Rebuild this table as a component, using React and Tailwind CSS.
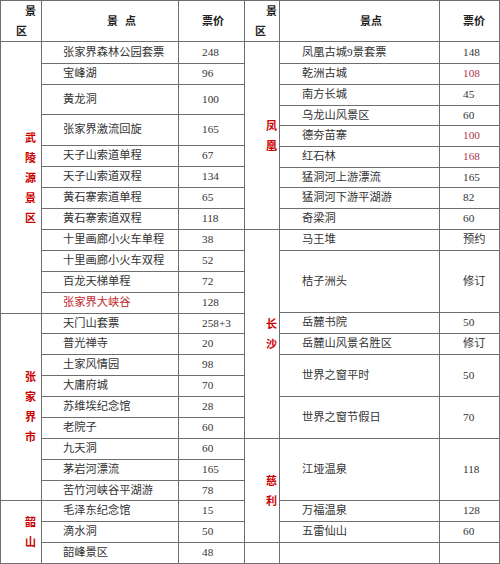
import React from 'react';

const SPAN = { 1: 'row-span-1', 3: 'row-span-3', 6: 'row-span-6', 9: 'row-span-9', 12: 'row-span-12' };

const leftGroups = [
  {
    region: '武陵源景区',
    items: [
      ['张家界森林公园套票', '248'],
      ['宝峰湖', '96'],
      ['黄龙洞', '100'],
      ['张家界激流回旋', '165'],
      ['天子山索道单程', '67'],
      ['天子山索道双程', '134'],
      ['黄石寨索道单程', '65'],
      ['黄石寨索道双程', '118'],
      ['十里画廊小火车单程', '38'],
      ['十里画廊小火车双程', '52'],
      ['百龙天梯单程', '72'],
      ['张家界大峡谷', '128', 'name'],
    ],
  },
  {
    region: '张家界市',
    items: [
      ['天门山套票', '258+3'],
      ['普光禅寺', '20'],
      ['土家风情园', '98'],
      ['大庸府城', '70'],
      ['苏维埃纪念馆', '28'],
      ['老院子', '60'],
      ['九天洞', '60'],
      ['茅岩河漂流', '165'],
      ['苦竹河峡谷平湖游', '78'],
    ],
  },
  {
    region: '韶山',
    items: [
      ['毛泽东纪念馆', '15'],
      ['滴水洞', '50'],
      ['韶峰景区', '48'],
    ],
  },
];

const rightGroups = [
  {
    region: '凤凰',
    items: [
      ['凤凰古城9景套票', '148'],
      ['乾洲古城', '108', 'price'],
      ['南方长城', '45'],
      ['乌龙山风景区', '60'],
      ['德夯苗寨', '100', 'price'],
      ['红石林', '168', 'price'],
      ['猛洞河上游漂流', '165'],
      ['猛洞河下游平湖游', '82'],
      ['奇梁洞', '60'],
    ],
  },
  {
    region: '长沙',
    items: [
      ['马王堆', '预约'],
      ['桔子洲头', '修订'],
      ['岳麓书院', '50'],
      ['岳麓山风景名胜区', '修订'],
      ['世界之窗平时', '50'],
      ['世界之窗节假日', '70'],
    ],
  },
  {
    region: '慈利',
    items: [
      ['江垭温泉', '118'],
      ['万福温泉', '128'],
      ['五雷仙山', '60'],
    ],
  },
  { region: '', items: [['', '']] },
];

function RegionCell({ text, span, pad }) {
  return (
    <div className={`${SPAN[span]} flex flex-col items-end justify-center bg-white ${pad} text-[11px] font-bold leading-[20px] text-[#cc0000]`}>
      {text.split('').map((ch, i) => (
        <div key={i}>{ch}</div>
      ))}
    </div>
  );
}

function Rows({ groups, regionPad, namePad, pricePad }) {
  return groups.map((g) => (
    <React.Fragment key={g.region || 'empty'}>
      <RegionCell text={g.region} span={g.items.length} pad={regionPad} />
      {g.items.flatMap(([name, price, red], i) => [
        <div
          key={`n${i}`}
          className={`flex items-center bg-white ${namePad} ${red === 'name' ? 'text-[#c0282d]' : 'text-[#333]'}`}
        >
          {name}
        </div>,
        <div
          key={`p${i}`}
          className={`flex items-center bg-white ${pricePad} ${red === 'price' ? 'text-[#b0344f]' : 'text-[#333]'}`}
        >
          {price}
        </div>,
      ])}
    </React.Fragment>
  ));
}

export default function App() {
  return (
    <div className="flex h-[564px] w-[500px] bg-white font-['Liberation_Serif','Noto_Sans_CJK_SC',serif] text-[11.25px] leading-none">
      {/* left half */}
      <div className="grid grid-cols-[40px_136px_65px] grid-rows-[40px_21px_20px_29px_30px_20px_20px_20px_20px_20px_20px_20px_20px_19px_20px_20px_20px_20px_20px_20px_20px_19px_20px_20px_20px] gap-px bg-[#6e6e6e] p-px">
        <div className="flex flex-col justify-center bg-white text-[11px] font-bold leading-[20px] text-[#222]">
          <div className="pr-[5px] text-right">景</div>
          <div className="pl-[15px]">区</div>
        </div>
        <div className="flex items-center bg-white pl-[65px] text-[11px] font-bold text-[#222]">
          <span>景</span>
          <span className="ml-[7px]">点</span>
        </div>
        <div className="flex items-center bg-white pl-[23px] text-[11px] font-bold text-[#222]">票价</div>
        <Rows groups={leftGroups} regionPad="pr-[5px]" namePad="pl-[21px]" pricePad="pl-[23px]" />
      </div>

      {/* right half */}
      <div className="grid grid-cols-[34px_159px_59px] grid-rows-[40px_21px_20px_20px_19px_20px_20px_19px_20px_20px_20px_61px_20px_20px_41px_41px_61px_20px_20px_20px] gap-px bg-[#6e6e6e] py-px pr-px">
        <div className="flex flex-col justify-center bg-white text-[11px] font-bold leading-[20px] text-[#222]">
          <div className="pr-[2px] text-right">景</div>
          <div className="pl-[10px]">区</div>
        </div>
        <div className="flex items-center bg-white pl-[80px] text-[11px] font-bold text-[#222]">景点</div>
        <div className="flex items-center bg-white pl-[23px] text-[11px] font-bold text-[#222]">票价</div>
        <Rows groups={rightGroups} regionPad="pr-[2px]" namePad="pl-[22px]" pricePad="pl-[23px]" />
      </div>
    </div>
  );
}
